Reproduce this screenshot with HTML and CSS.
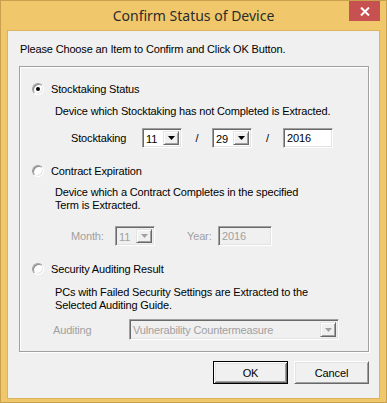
FILE: index.html
```html
<!DOCTYPE html>
<html lang="en">
<head>
    <meta charset="UTF-8">
    <title>Confirm Status of Device</title>
    <link rel="stylesheet" href="styles.css">
</head>
<body>
    <div class="window">
        <div class="titlebar">
            <span class="title">Confirm Status of Device</span>
            <button class="close" aria-label="Close">
                <svg width="10" height="9" viewBox="0 0 10 9"><path d="M1 0.5L9 8.5M9 0.5L1 8.5" stroke="#fff" stroke-width="2"/></svg>
            </button>
        </div>

        <div class="client">
            <p class="prompt">Please Choose an Item to Confirm and Click OK Button.</p>

            <div class="group">
                <!-- Stocktaking -->
                <div class="option opt-stock"><span class="radio checked"></span>Stocktaking Status</div>
                <p class="desc desc-stock">Device which Stocktaking has not Completed is Extracted.</p>
                <div class="fields fields-stock">
                    <span class="field-label lbl-stock">Stocktaking</span>
                    <div class="combo"><span class="value">11</span><span class="drop"><svg width="7" height="4"><path d="M0 0h7L3.5 4z"/></svg></span></div>
                    <span class="sep">/</span>
                    <div class="combo"><span class="value">29</span><span class="drop"><svg width="7" height="4"><path d="M0 0h7L3.5 4z"/></svg></span></div>
                    <span class="sep sep-2">/</span>
                    <div class="edit edit-year">2016</div>
                </div>

                <!-- Contract -->
                <div class="option opt-contract"><span class="radio"></span>Contract Expiration</div>
                <p class="desc desc-contract">Device which a Contract Completes in the specified<br>Term is Extracted.</p>
                <div class="fields fields-contract">
                    <span class="field-label lbl-month disabled">Month:</span>
                    <div class="combo disabled"><span class="value">11</span><span class="drop"><svg width="7" height="4"><path d="M0 0h7L3.5 4z" fill="#a0a0a0"/></svg></span></div>
                    <span class="field-label lbl-year disabled">Year:</span>
                    <div class="edit edit-cyear disabled">2016</div>
                </div>

                <!-- Auditing -->
                <div class="option opt-audit"><span class="radio"></span>Security Auditing Result</div>
                <p class="desc desc-audit">PCs with Failed Security Settings are Extracted to the<br>Selected Auditing Guide.</p>
                <div class="fields fields-audit">
                    <span class="field-label lbl-audit disabled">Auditing</span>
                    <div class="combo combo-wide disabled"><span class="value">Vulnerability Countermeasure</span><span class="drop"><svg width="7" height="4"><path d="M0 0h7L3.5 4z" fill="#a0a0a0"/></svg></span></div>
                </div>
            </div>

            <div class="buttons">
                <button class="btn btn-default">OK</button>
                <button class="btn">Cancel</button>
            </div>
        </div>
    </div>
</body>
</html>
```

FILE: styles.css
```css
body {
    margin: 0;
    font-family: "Liberation Sans", Arial, sans-serif;
    font-size: 11px;
    letter-spacing: -0.15px;
    color: #000;
}
p {
    margin: 0;
}
.window {
    width: 387px;
    height: 403px;
    box-sizing: border-box;
    border: 1px solid #c9a14e;
    background: #f0c86b;
    display: flex;
    flex-direction: column;
}
.titlebar {
    height: 29px;
    flex: none;
    display: grid;
    grid-template-columns: 1fr auto 1fr;
    align-items: center;
}
.title {
    grid-column: 2;
    font-family: "Noto Sans", "Open Sans", sans-serif;
    font-size: 14px;
    letter-spacing: 0;
    color: #2b2b2b;
    white-space: nowrap;
}
.close {
    grid-column: 3;
    justify-self: end;
    align-self: start;
    width: 31px;
    height: 20px;
    margin-right: 6px;
    padding: 0;
    border: 0;
    background: #c75050;
    display: flex;
    align-items: center;
    justify-content: center;
}
.client {
    flex: 1;
    margin: 0 6px 3px;
    border: 1px solid #dcb35c;
    background: #f0f0f0;
    padding: 12px 0 0 11px;
}
.prompt {
    line-height: 13px;
    padding-left: 1px;
}
.group {
    width: 350px;
    height: 286px;
    box-sizing: border-box;
    margin-top: 10px;
    border: 1px solid #a0a0a0;
    box-shadow: inset 1px 1px #fff, 1px 1px #fff;
    padding-top: 15px;
}
.option {
    display: flex;
    align-items: center;
    gap: 7px;
    height: 13px;
    padding-left: 12px;
}
.radio {
    width: 12px;
    height: 12px;
    box-sizing: border-box;
    border-radius: 50%;
    border: 1px solid;
    border-color: #a0a0a0 #fff #fff #a0a0a0;
    box-shadow: inset 1px 1px #8a8a8a, inset -1px -1px #e3e3e3;
    background: #fff;
    display: flex;
    align-items: center;
    justify-content: center;
}
.radio.checked::after {
    content: "";
    width: 4px;
    height: 4px;
    border-radius: 50%;
    background: #000;
}
.desc {
    margin-left: 35px;
    line-height: 13px;
}
.desc-stock { margin-top: 10px; }
.opt-contract { margin-top: 16px; }
.desc-contract { margin-top: 9px; }
.opt-audit { margin-top: 16px; }
.desc-audit { margin-top: 11px; }
.fields {
    display: flex;
    align-items: center;
}
.fields-stock { margin-top: 10px; padding-left: 51px; }
.fields-contract { margin-top: 14px; padding-left: 51px; }
.fields-audit { margin-top: 7px; padding-left: 33px; }
.field-label { flex: none; }
.lbl-stock { width: 71px; }
.lbl-month { width: 44px; }
.lbl-year { width: 31px; margin-left: 32px; }
.lbl-audit { width: 76px; }
.disabled { color: #a0a0a0; }
.sep {
    width: 30px;
    text-align: center;
}
.sep-2 { width: 31px; }
.combo, .edit {
    box-sizing: border-box;
    height: 20px;
    border: 1px solid;
    border-color: #a0a0a0 #fff #fff #a0a0a0;
    box-shadow: inset 1px 1px #696969, inset -1px -1px #e3e3e3;
    background: #fff;
    padding: 2px;
}
.combo {
    width: 40px;
    display: flex;
}
.combo .value {
    flex: 1;
    line-height: 16px;
    padding-left: 1px;
    white-space: nowrap;
    overflow: hidden;
}
.combo.disabled, .edit.disabled {
    background: #f0f0f0;
}
.combo-wide {
    width: 210px;
    height: 21px;
}
.drop {
    width: 16px;
    box-sizing: border-box;
    border: 1px solid;
    border-color: #e3e3e3 #696969 #696969 #e3e3e3;
    box-shadow: inset 1px 1px #fff, inset -1px -1px #a0a0a0;
    background: #f0f0f0;
    display: flex;
    align-items: center;
    justify-content: center;
}
.edit {
    line-height: 15px;
    padding-left: 3px;
}
.edit-year { width: 50px; }
.edit-cyear { width: 54px; }
.buttons {
    width: 350px;
    margin-top: 9px;
    display: flex;
    justify-content: flex-end;
    gap: 6px;
}
.btn {
    width: 75px;
    height: 23px;
    box-sizing: border-box;
    padding: 0;
    font-family: "Liberation Sans", Arial, sans-serif;
    font-size: 11px;
    letter-spacing: -0.15px;
    color: #000;
    background: #f0f0f0;
    border: 1px solid;
    border-color: #fff #696969 #696969 #fff;
    box-shadow: inset 1px 1px #e3e3e3, inset -1px -1px #a0a0a0;
}
.btn-default {
    border-color: #000;
    box-shadow: inset 1px 1px #fff, inset -1px -1px #696969, inset 2px 2px #e3e3e3, inset -2px -2px #a0a0a0;
}
```
